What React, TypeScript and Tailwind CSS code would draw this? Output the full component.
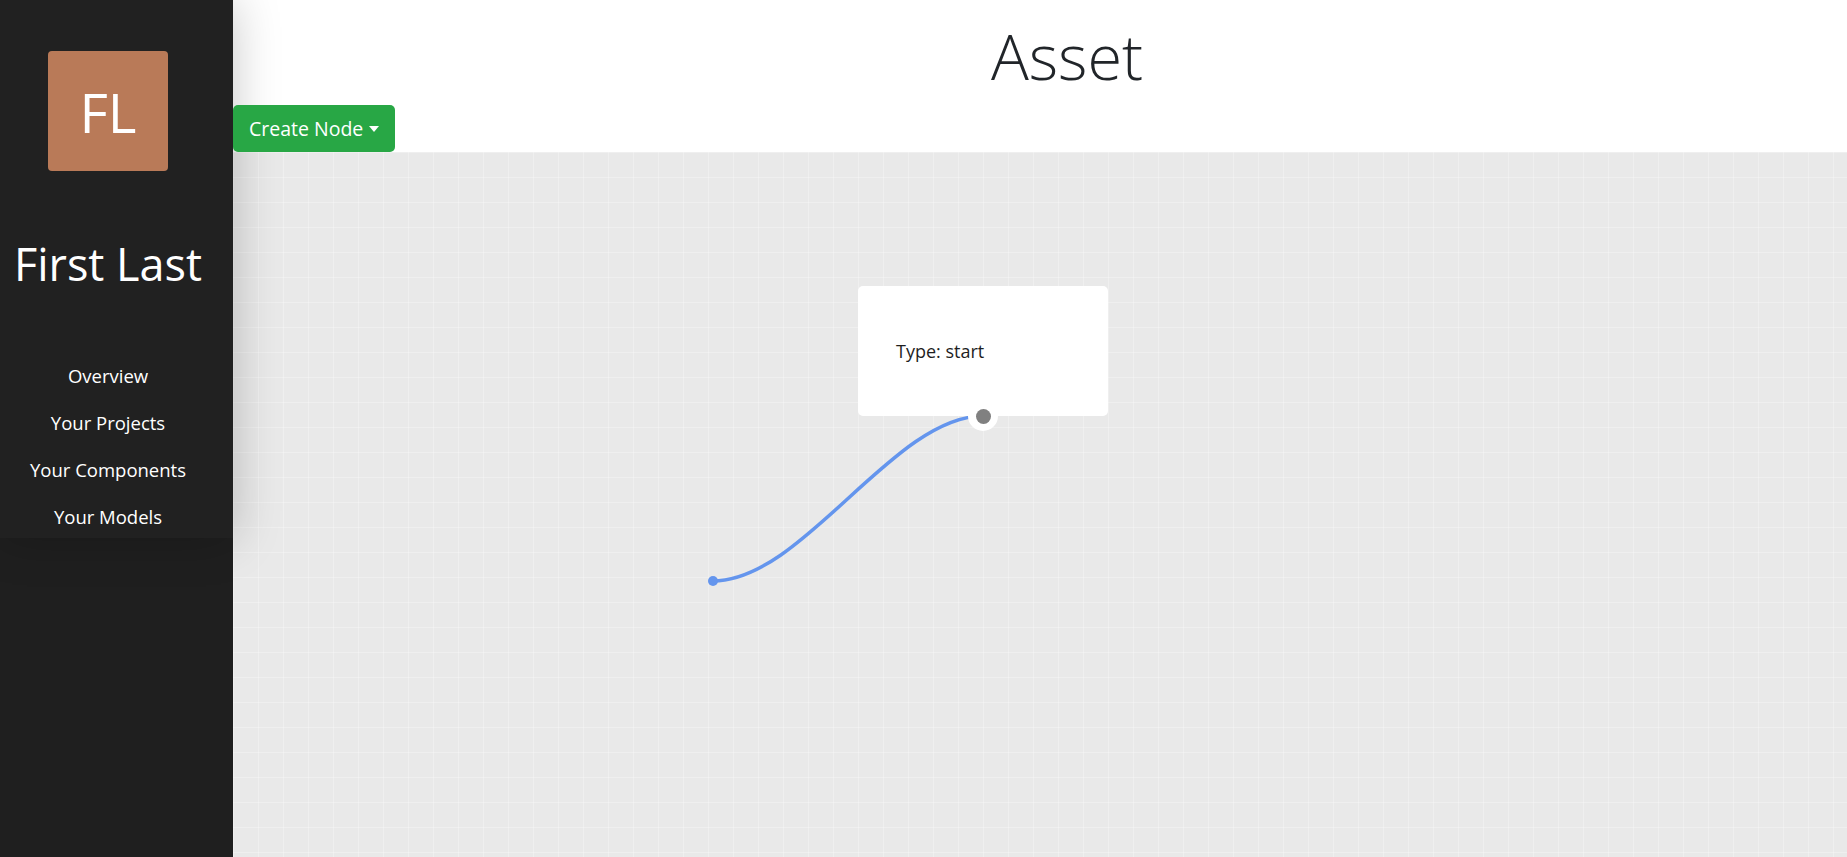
import React from 'react';

const NAV_ITEMS = ['Overview', 'Your Projects', 'Your Components', 'Your Models'];

function Sidebar() {
  return (
    <aside className="w-[233px] shrink-0 h-full bg-[#1f1f1f] relative z-10">
      <div className="h-[538px] bg-[#212121] shadow-[0_0_45px_rgba(0,0,0,0.22)]">
        <div className="w-[216px] flex flex-col items-center pt-[51px]">
          {/* Avatar */}
          <div className="w-[120px] h-[120px] rounded-[4px] bg-[#b97a58] flex items-center justify-center">
            <span className="text-white text-[55px] leading-none">FL</span>
          </div>

          <h2 className="mt-[66px] text-white text-[45px] leading-[1.2] whitespace-nowrap">First Last</h2>

          <nav className="mt-[61px] flex flex-col items-center">
            {NAV_ITEMS.map(item => (
              <a key={item} className="h-[47px] leading-[47px] text-[18.5px] text-white whitespace-nowrap cursor-pointer">
                {item}
              </a>
            ))}
          </nav>
        </div>
      </div>
    </aside>
  );
}

function Canvas() {
  return (
    <div className="flex-1 relative overflow-hidden bg-[#e9e9e9] [background-image:linear-gradient(rgba(255,255,255,0.25)_1px,transparent_1px),linear-gradient(90deg,rgba(255,255,255,0.25)_1px,transparent_1px)] [background-size:25px_25px]">
      {/* Link */}
      <svg className="absolute inset-0 w-full h-full overflow-visible">
        <path d="M480 429 C570 429 660 264 750 264" fill="none" stroke="#6495ed" strokeWidth="3.5" />
        <circle cx="480" cy="429" r="5" fill="#6495ed" />
      </svg>

      {/* Node */}
      <div className="absolute left-[625px] top-[134px] w-[250px] h-[130px] bg-white rounded-[5px] flex items-center pl-[38px]">
        <span className="text-[18px] text-[#1e1e1e]">Type: start</span>
      </div>

      {/* Port */}
      <div className="absolute left-[735px] top-[249px] w-[30px] h-[30px] rounded-full bg-white flex items-center justify-center">
        <div className="w-[15px] h-[15px] rounded-full bg-[#808080]" />
      </div>
    </div>
  );
}

export default function App() {
  return (
    <div className="flex h-[857px] w-full overflow-hidden bg-white font-['Open_Sans',sans-serif]">
      <Sidebar />

      <main className="flex-1 flex flex-col min-w-0">
        <header className="h-[152px] shrink-0 bg-white flex flex-col">
          <h1 className="pt-[18px] pl-[54px] text-center text-[63px] font-light leading-[1.2] text-[#212529]">
            Asset
          </h1>
          <div className="mt-auto">
            <button className="relative z-20 h-[47px] px-4 rounded-[5px] bg-[#28a745] text-white text-[19.5px] flex items-center gap-[6px]">
              Create Node
              <span className="w-0 h-0 border-l-[5px] border-r-[5px] border-t-[6px] border-l-transparent border-r-transparent border-t-white" />
            </button>
          </div>
        </header>

        <Canvas />
      </main>
    </div>
  );
}
